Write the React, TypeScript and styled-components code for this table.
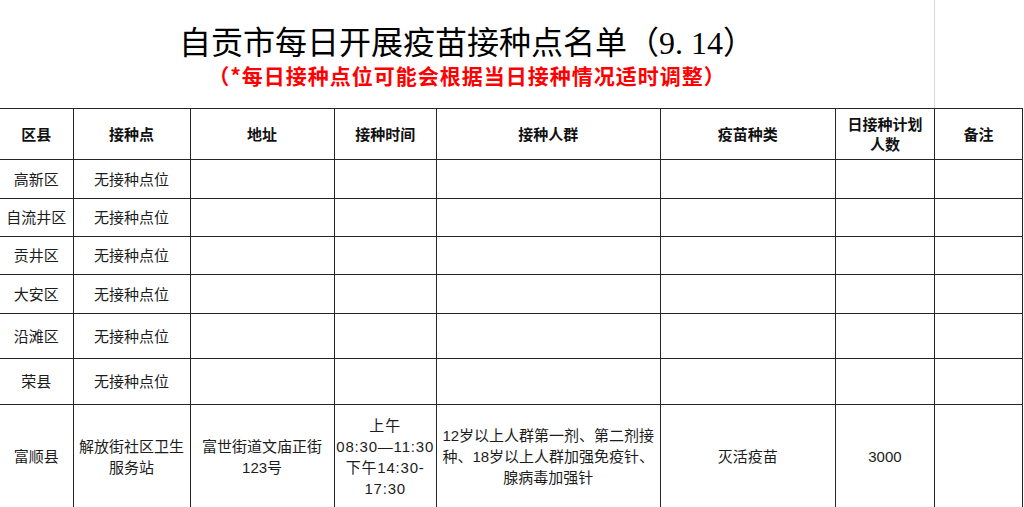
import React from "react";
import styled, { createGlobalStyle } from "styled-components";

const GlobalStyle = createGlobalStyle`
  html, body {
    margin: 0;
    padding: 0;
    background: #ffffff;
    overflow: hidden;
  }
  body {
    font-family: "Liberation Sans", "Noto Sans CJK SC", sans-serif;
    color: #1c1c1c;
    text-spacing-trim: space-all;
  }
`;

const Sheet = styled.div`
  width: 1024px;
  height: 507px;
  overflow: hidden;
  background: #fff;
`;

const TitleBlock = styled.div`
  display: grid;
  grid-template-columns: 934px 88px;
  height: 108px;
`;

const TitleCell = styled.div`
  display: flex;
  flex-direction: column;
  align-items: center;
  padding-top: 24px;
`;

const Gridline = styled.div`
  border-left: 1px solid #dadada;
`;

const Title = styled.h1`
  margin: 0;
  font-family: "Liberation Serif", "Noto Sans CJK SC", serif;
  font-size: 32px;
  font-weight: 400;
  line-height: 38px;
  color: #000;
  white-space: nowrap;
`;

const Note = styled.div`
  font-family: "Noto Sans CJK SC", sans-serif;
  font-size: 21px;
  font-weight: 700;
  line-height: 26px;
  letter-spacing: 1px;
  color: #ff0000;
  white-space: nowrap;
`;

const Table = styled.table`
  width: 1023px;
  table-layout: fixed;
  border-collapse: collapse;
`;

const Col = styled.col<{ $w: number }>`
  width: ${(p) => p.$w}px;
`;

const Row = styled.tr<{ $h: number }>`
  height: ${(p) => p.$h}px;
`;

const HeadCell = styled.th`
  border: 1px solid #262626;
  padding: 0 2px;
  font-family: "Noto Sans CJK SC", sans-serif;
  font-size: 15px;
  font-weight: 700;
  line-height: 20px;
  color: #111;
  text-align: center;
  vertical-align: middle;

  &:first-child {
    border-left: none;
  }
`;

const Cell = styled.td<{ $spaced?: boolean }>`
  border: 1px solid #262626;
  padding: 0;
  font-size: 15px;
  line-height: 21px;
  letter-spacing: ${(p) => (p.$spaced ? "0.8px" : "0")};
  text-align: center;
  vertical-align: middle;
  white-space: nowrap;

  &:first-child {
    border-left: none;
  }
`;

const columns = [73, 117, 144, 102, 224, 175, 99, 88];

const headers: string[][] = [
  ["区县"],
  ["接种点"],
  ["地址"],
  ["接种时间"],
  ["接种人群"],
  ["疫苗种类"],
  ["日接种计划", "人数"],
  ["备注"],
];

const emptyRows = [
  { county: "高新区", h: 39 },
  { county: "自流井区", h: 38 },
  { county: "贡井区", h: 38 },
  { county: "大安区", h: 39 },
  { county: "沿滩区", h: 45 },
  { county: "荣县", h: 46 },
];

const site = {
  county: "富顺县",
  name: ["解放街社区卫生", "服务站"],
  address: ["富世街道文庙正街", "123号"],
  time: ["上午", "08:30—11:30", "下午14:30-", "17:30"],
  crowd: ["12岁以上人群第一剂、第二剂接", "种、18岁以上人群加强免疫针、", "腺病毒加强针"],
  vaccine: "灭活疫苗",
  plan: "3000",
};

function Lines({ items }: { items: string[] }) {
  return (
    <>
      {items.map((t, i) => (
        <React.Fragment key={i}>
          {i > 0 && <br />}
          {t}
        </React.Fragment>
      ))}
    </>
  );
}

export default function App() {
  return (
    <Sheet>
      <GlobalStyle />
      <TitleBlock>
        <TitleCell>
          <Title>自贡市每日开展疫苗接种点名单（9. 14）</Title>
          <Note>（*每日接种点位可能会根据当日接种情况适时调整）</Note>
        </TitleCell>
        <Gridline />
      </TitleBlock>
      <Table>
        <colgroup>
          {columns.map((w, i) => (
            <Col key={i} $w={w} />
          ))}
        </colgroup>
        <thead>
          <Row $h={51}>
            {headers.map((h, i) => (
              <HeadCell key={i}>
                <Lines items={h} />
              </HeadCell>
            ))}
          </Row>
        </thead>
        <tbody>
          {emptyRows.map((r) => (
            <Row key={r.county} $h={r.h}>
              <Cell>{r.county}</Cell>
              <Cell>无接种点位</Cell>
              <Cell />
              <Cell />
              <Cell />
              <Cell />
              <Cell />
              <Cell />
            </Row>
          ))}
          <Row $h={104}>
            <Cell>{site.county}</Cell>
            <Cell>
              <Lines items={site.name} />
            </Cell>
            <Cell>
              <Lines items={site.address} />
            </Cell>
            <Cell $spaced>
              <Lines items={site.time} />
            </Cell>
            <Cell>
              <Lines items={site.crowd} />
            </Cell>
            <Cell>{site.vaccine}</Cell>
            <Cell>{site.plan}</Cell>
            <Cell />
          </Row>
        </tbody>
      </Table>
    </Sheet>
  );
}
